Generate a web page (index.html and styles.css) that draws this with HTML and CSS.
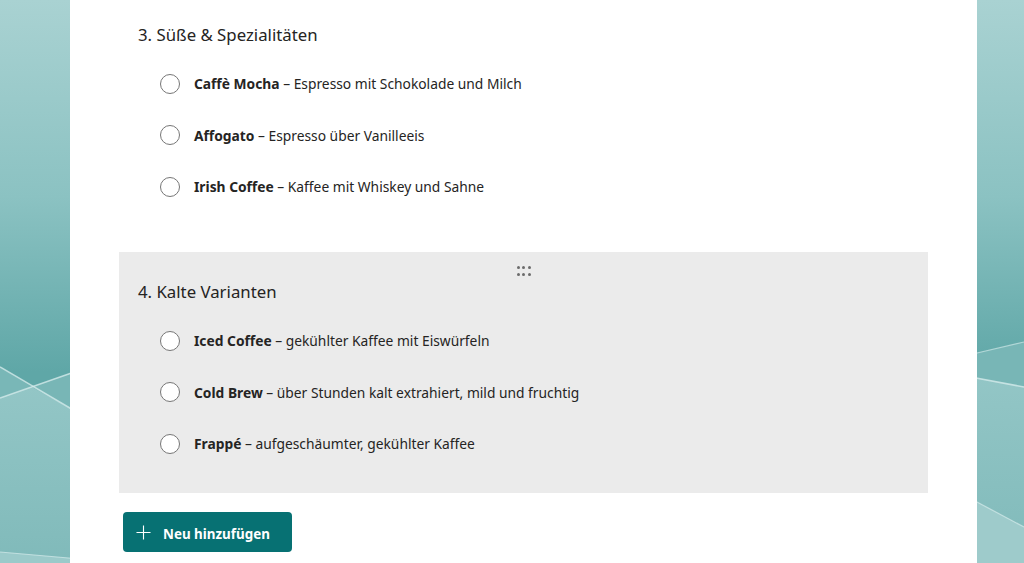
FILE: index.html
```html
<!DOCTYPE html>
<html lang="de">
<head>
<meta charset="utf-8">
<title>Kaffee-Umfrage</title>
<link rel="stylesheet" href="styles.css">
</head>
<body>
<svg class="backdrop" viewBox="0 0 1024 563" preserveAspectRatio="none" aria-hidden="true">
  <defs>
    <linearGradient id="bg" x1="0" y1="0" x2="0" y2="1">
      <stop offset="0" stop-color="#a9d2d2"/>
      <stop offset="0.35" stop-color="#8bc2c2"/>
      <stop offset="0.66" stop-color="#5fa7a7"/>
      <stop offset="1" stop-color="#5fa7a7"/>
    </linearGradient>
    <linearGradient id="low" x1="0" y1="0" x2="0" y2="1">
      <stop offset="0" stop-color="#93c6c6"/>
      <stop offset="1" stop-color="#80baba"/>
    </linearGradient>
  </defs>
  <rect width="1024" height="563" fill="url(#bg)"/>
  <!-- left decorations -->
  <polygon points="0,367 32,387 0,398" fill="#79b7b7"/>
  <polygon points="32,387 80,370 80,414" fill="#78b6b6"/>
  <polygon points="0,398 32,387 80,414 80,563 0,563" fill="url(#low)"/>
  <polygon points="0,552 80,559 80,563 0,563" fill="#9bcaca"/>
  <line x1="0" y1="367" x2="80" y2="414" stroke="#d6ecec" stroke-width="1.5" opacity="0.8"/>
  <line x1="0" y1="398" x2="80" y2="370" stroke="#d6ecec" stroke-width="1.5" opacity="0.8"/>
  <line x1="0" y1="552" x2="80" y2="559" stroke="#d6ecec" stroke-width="1.2" opacity="0.7"/>
  <!-- right decorations -->
  <polygon points="960,357 1024,342 1024,563 960,563" fill="#78b6b6"/>
  <polygon points="960,375 1024,387 1024,563 960,563" fill="url(#low)"/>
  <polygon points="960,493 1024,527 1024,563 960,563" fill="#9ecbcb"/>
  <line x1="960" y1="357" x2="1024" y2="342" stroke="#cfe8e8" stroke-width="1.2" opacity="0.7"/>
  <line x1="960" y1="375" x2="1024" y2="387" stroke="#d6ecec" stroke-width="1.5" opacity="0.8"/>
  <line x1="960" y1="493" x2="1024" y2="527" stroke="#d6ecec" stroke-width="1.2" opacity="0.7"/>
</svg>

<main class="panel">
  <section class="question">
    <h2 class="q-title">3. Süße &amp; Spezialitäten</h2>
    <ul class="options">
      <li class="option"><span class="radio"></span><span class="label"><b>Caffè Mocha</b> – Espresso mit Schokolade und Milch</span></li>
      <li class="option"><span class="radio"></span><span class="label"><b>Affogato</b> – Espresso über Vanilleeis</span></li>
      <li class="option"><span class="radio"></span><span class="label"><b>Irish Coffee</b> – Kaffee mit Whiskey und Sahne</span></li>
    </ul>
  </section>

  <section class="question active">
    <div class="handle" aria-hidden="true">
      <span></span><span></span><span></span><span></span><span></span><span></span>
    </div>
    <h2 class="q-title">4. Kalte Varianten</h2>
    <ul class="options">
      <li class="option"><span class="radio"></span><span class="label"><b>Iced Coffee</b> – gekühlter Kaffee mit Eiswürfeln</span></li>
      <li class="option"><span class="radio"></span><span class="label"><b>Cold Brew</b> – über Stunden kalt extrahiert, mild und fruchtig</span></li>
      <li class="option"><span class="radio"></span><span class="label"><b>Frappé</b> – aufgeschäumter, gekühlter Kaffee</span></li>
    </ul>
  </section>

  <button class="add-btn" type="button">
    <svg class="plus" viewBox="0 0 16 16" aria-hidden="true"><path d="M8 0.5V15.5M0.5 8H15.5" stroke="#fff" stroke-width="1.2" fill="none"/></svg>
    <span>Neu hinzufügen</span>
  </button>
</main>
</body>
</html>
```

FILE: styles.css
```css
html, body {
  margin: 0;
  height: 100%;
  overflow: hidden;
}

body {
  font-family: "Segoe UI", "Noto Sans", "Open Sans", sans-serif;
  color: #252423;
  background: #7fbaba;
}

.backdrop {
  position: fixed;
  inset: 0;
  width: 100%;
  height: 100%;
  z-index: 0;
}

.panel {
  position: relative;
  z-index: 1;
  box-sizing: border-box;
  width: 907px;
  margin-left: 70px;
  min-height: 100vh;
  background: #fff;
  padding: 0 49px;
  display: flex;
  flex-direction: column;
}

.question {
  box-sizing: border-box;
  height: 241px;
  padding: 28px 19px 0;
  display: flex;
  flex-direction: column;
}

.question:first-child {
  margin-top: -5px;
  margin-bottom: 16px;
}

.question.active {
  background: #ebebeb;
  position: relative;
}

.handle {
  position: absolute;
  top: 14px;
  left: 50%;
  transform: translateX(-50%);
  display: grid;
  grid-template-columns: repeat(3, 3px);
  grid-auto-rows: 3px;
  column-gap: 2.5px;
  row-gap: 4px;
}

.handle span {
  width: 3px;
  height: 3px;
  border-radius: 50%;
  background: #6b6b6b;
}

.q-title {
  margin: 0;
  font-size: 16.8px;
  font-weight: 400;
  line-height: 24px;
  color: #252423;
}

.options {
  list-style: none;
  margin: 11px 0 0;
  padding: 0 0 0 22px;
}

.option {
  height: 51.5px;
  display: flex;
  align-items: center;
  gap: 14px;
  font-size: 13.8px;
}

.radio {
  box-sizing: border-box;
  width: 20px;
  height: 20px;
  border-radius: 50%;
  border: 1px solid #767676;
  background: #fff;
  flex: none;
}

.label b {
  font-weight: 700;
}

.add-btn {
  align-self: flex-start;
  margin: 19px 0 0 4px;
  height: 40px;
  width: 169px;
  box-sizing: border-box;
  border: none;
  border-radius: 4px;
  background: #077173;
  color: #fff;
  font-family: inherit;
  font-size: 13.4px;
  font-weight: 700;
  display: flex;
  align-items: center;
  gap: 12px;
  padding: 3px 0 0 13px;
  cursor: pointer;
}

.plus {
  width: 15px;
  height: 15px;
  flex: none;
  margin-top: -2px;
}
```
